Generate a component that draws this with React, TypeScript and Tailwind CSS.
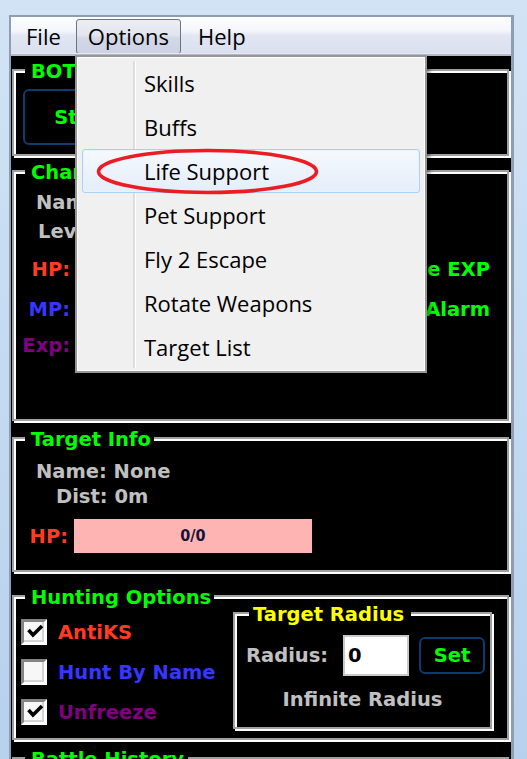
import React from "react";

const G = "font-['DejaVu_Sans',sans-serif] font-bold text-[19.5px]";
const M = "font-['Open_Sans','Noto_Sans',sans-serif] text-[22px] text-black";

function GroupBox({
  title,
  titleClass,
  className,
  children,
}: {
  title: string;
  titleClass: string;
  className: string;
  children?: React.ReactNode;
}) {
  return (
    <div
      className={
        "relative border-2 border-[#a0a0a0] shadow-[inset_2px_2px_0_#ffffff,2px_2px_0_#ffffff] " +
        className
      }
    >
      <div className={"absolute -top-[9px] bg-black leading-[20px] whitespace-nowrap " + G + " " + titleClass}>
        {title}
      </div>
      {children}
    </div>
  );
}

function CheckBox({ checked }: { checked: boolean }) {
  return (
    <div className="w-[26px] h-[26px] shrink-0 border-[3px] border-t-[#858585] border-l-[#858585] border-r-white border-b-white bg-[#f7f7f7] shadow-[inset_-2px_-2px_0_#d4d4d4] flex items-start">
      {checked && (
        <svg width="17" height="15" viewBox="0 0 17 15" className="mt-[2px] ml-[3px]">
          <path d="M1.5 6 L6 11 L15 2" stroke="#000" strokeWidth="3.6" fill="none" strokeLinejoin="miter" strokeLinecap="butt" />
        </svg>
      )}
    </div>
  );
}

const menuItems = ["Skills", "Buffs", "Life Support", "Pet Support", "Fly 2 Escape", "Rotate Weapons", "Target List"];

export default function App() {
  return (
    <div className="relative w-[527px] h-[759px] overflow-hidden bg-[linear-gradient(to_bottom,#d2e3f5,#c4daf1_50%,#b7d0ec)]">
      <div className="h-[15px]" />
      <div className="ml-[9px] w-[505px] h-[744px] border-l-2 border-t-2 border-r-[3px] border-[#8e9db2] flex flex-col">
        {/* menu bar */}
        <div className="h-[36px] shrink-0 bg-[linear-gradient(to_bottom,#fdfdfe_0%,#f4f6fb_38%,#e2e6f3_52%,#dbe0ef_100%)] flex items-start pt-[2px]">
          <div className={"ml-[3px] h-[34px] px-[12px] flex items-center " + M}>File</div>
          <div
            className={
              "ml-[3px] h-[35px] px-[11px] flex items-center rounded-[3px] border-[1.5px] border-[#6e7380] bg-[linear-gradient(to_bottom,#eceef3_0%,#e2e5ee_45%,#d3d8e7_55%,#ccd2e4_100%)] " +
              M
            }
          >
            Options
          </div>
          <div className={"ml-[5px] h-[34px] px-[12px] flex items-center " + M}>Help</div>
        </div>
        <div className="h-[1px] shrink-0 bg-[#e6e9f3]" />
        <div className="h-[2px] shrink-0 bg-[#b4bac8]" />

        {/* client */}
        <div className="flex-1 bg-black flex flex-col pl-[1px]">
          {/* BOT panel */}
          <GroupBox title="BOT Controls" titleClass="left-[11px] pl-[6px] pr-[4px] text-[#00ff00]" className="mt-[13px] w-[497px] h-[87px] shrink-0">
            <div className="mt-[18px] ml-[9px] w-[118px] h-[56px] rounded-[6px] border-2 border-[#0e3c6c] flex items-center justify-center">
              <span className={G + " text-[#00ff00] leading-[25px]"}>Start</span>
            </div>
          </GroupBox>

          {/* Character panel */}
          <GroupBox title="Character Info" titleClass="left-[11px] pl-[6px] pr-[4px] text-[#00ff00]" className="mt-[14px] w-[497px] h-[251px] shrink-0">
            <div className={"flex flex-col leading-[25px] " + G}>
              <div className="mt-[18px] h-[25px] ml-[22px] text-[#c0c0c0]">Name:</div>
              <div className="mt-[4px] h-[25px] ml-[24px] text-[#c0c0c0]">Level:</div>
              <div className="mt-[13px] h-[25px] flex">
                <div className="w-[56px] text-right text-[#ff3b22]">HP:</div>
                <div className="ml-auto mr-[17px] text-[#00ff00]">Save EXP</div>
              </div>
              <div className="mt-[15px] h-[25px] flex">
                <div className="w-[56px] text-right text-[#3636ff]">MP:</div>
                <div className="ml-auto mr-[17px] text-[#00ff00]">Death Alarm</div>
              </div>
              <div className="mt-[11px] h-[25px] flex">
                <div className="w-[56px] text-right text-[#800080]">Exp:</div>
              </div>
            </div>
          </GroupBox>

          {/* Target Info */}
          <GroupBox title="Target Info" titleClass="left-[11px] pl-[6px] pr-[3px] text-[#00ff00]" className="mt-[16px] w-[497px] h-[135px] shrink-0">
            <div className={"flex flex-col leading-[25px] " + G}>
              <div className="mt-[20px] h-[25px] ml-[22px] text-[#c0c0c0]">Name: None</div>
              <div className="h-[25px] ml-[42px] text-[#c0c0c0]">Dist: 0m</div>
              <div className="mt-[10px] h-[34px] flex items-center">
                <div className="w-[54px] text-right text-[#ff3b22]">HP:</div>
                <div className="ml-[6px] w-[238px] h-[34px] bg-[#ffb4b4] flex items-center justify-center">
                  <span className="font-['DejaVu_Sans_Condensed','DejaVu_Sans',sans-serif] font-bold text-[16px] leading-[20px] text-[#141438]">0/0</span>
                </div>
              </div>
            </div>
          </GroupBox>

          {/* Hunting Options */}
          <GroupBox title="Hunting Options" titleClass="left-[11px] pl-[6px] pr-[3px] text-[#00ff00]" className="mt-[23px] w-[497px] h-[145px] shrink-0">
            <div className="flex">
              <div className={"w-[219px] pl-[7px] pt-[22px] flex flex-col gap-[14px] leading-[25px] " + G}>
                <div className="flex items-center h-[26px]">
                  <CheckBox checked />
                  <span className="ml-[11px] text-[#ff3b22]">AntiKS</span>
                </div>
                <div className="flex items-center h-[26px]">
                  <CheckBox checked={false} />
                  <span className="ml-[11px] text-[#3636ff]">Hunt By Name</span>
                </div>
                <div className="flex items-center h-[26px]">
                  <CheckBox checked />
                  <span className="ml-[11px] text-[#800080]">Unfreeze</span>
                </div>
              </div>
              <GroupBox title="Target Radius" titleClass="left-[14px] pl-[4px] pr-[7px] text-[#ffff00]" className="mt-[15px] w-[259px] h-[117px] shrink-0">
                <div className={"flex flex-col leading-[25px] " + G}>
                  <div className="mt-[21px] pl-[11px] flex items-center h-[41px]">
                    <span className="text-[#c0c0c0]">Radius:</span>
                    <div className="ml-[15px] w-[66px] h-[41px] bg-white border-2 border-[#c9c9c9] flex items-center pl-[3px] text-black">0</div>
                    <div className="ml-[10px] w-[66px] h-[37px] rounded-[6px] border-2 border-[#0c3b6e] flex items-center justify-center text-[#00ff00]">Set</div>
                  </div>
                  <div className="mt-[11px] h-[25px] text-center text-[#c0c0c0]">Infinite Radius</div>
                </div>
              </GroupBox>
            </div>
          </GroupBox>

          {/* Battle History */}
          <GroupBox title="Battle History" titleClass="left-[11px] pl-[6px] pr-[4px] text-[#00ff00]" className="mt-[17px] w-[497px] h-[100px] shrink-0" />
        </div>
      </div>

      {/* Options dropdown */}
      <div className="absolute left-[75px] top-[55px] w-[352px] h-[318px] border-2 border-[#979797] bg-[#f0f0f0] shadow-[inset_1px_1px_0_#ffffff,inset_-1px_-1px_0_#ffffff,3px_3px_4px_rgba(0,0,0,0.35)] pt-[4px]">
        <div className="absolute left-[56px] top-[4px] bottom-[3px] w-[3px] border-l-2 border-[#dddddd] border-r border-r-white" />
        {menuItems.map((item) => (
          <div
            key={item}
            className={
              item === "Life Support"
                ? "relative mx-[5px] h-[44px] rounded-[3px] border border-[#a9d1f6] bg-[linear-gradient(to_bottom,#f5f9fd,#e4edf9)] shadow-[inset_0_0_0_1px_#e8f3fd] flex items-center pl-[61px] " + M
                : "relative mx-[5px] h-[44px] rounded-[3px] border border-transparent flex items-center pl-[61px] " + M
            }
          >
            {item}
          </div>
        ))}
      </div>

      {/* red ellipse annotation */}
      <svg className="absolute left-[95px] top-[147px]" width="226" height="50" viewBox="0 0 226 50">
        <ellipse cx="112.5" cy="24.5" rx="109" ry="21" fill="none" stroke="#ec1c24" strokeWidth="3.6" />
      </svg>
    </div>
  );
}
